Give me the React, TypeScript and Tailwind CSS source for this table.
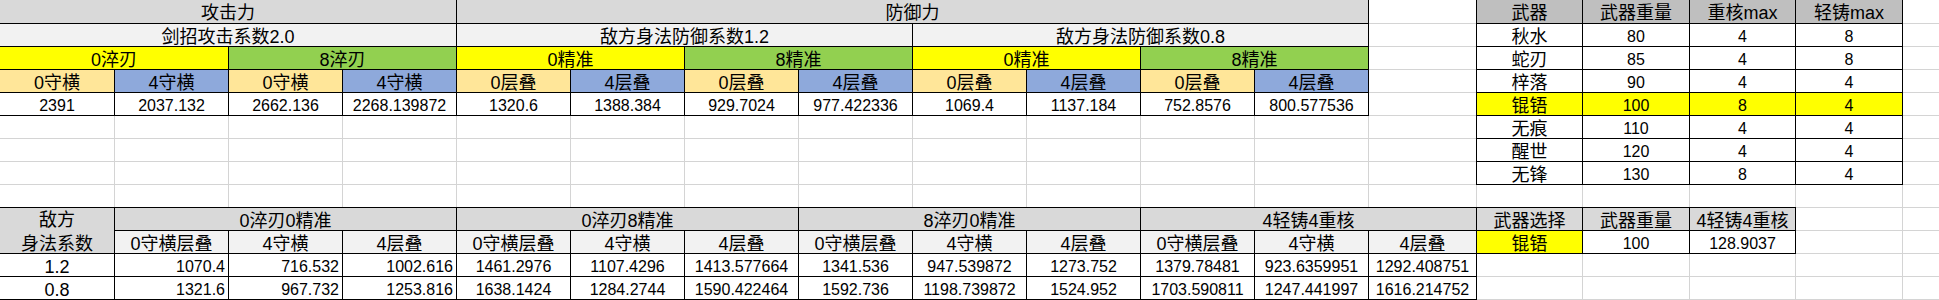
import type { ReactNode } from 'react';

const ORANGE = 'bg-[#ffe699]';
const BLUE = 'bg-[#8ea9db]';
const YELLOW = 'bg-[#ffff00]';
const GREEN = 'bg-[#92d050]';

interface CellProps {
  children?: ReactNode;
  className?: string;
  right?: boolean;
}

function Cell({ children, className = '', right = false }: CellProps) {
  const numeric = typeof children === 'number';
  return (
    <div
      className={[
        'overflow-hidden whitespace-nowrap text-black',
        numeric ? 'text-[16px] leading-[25px]' : 'text-[18px] leading-[26px]',
        right ? 'text-right pr-[3px]' : 'text-center',
        className || 'bg-white',
      ].join(' ')}
    >
      {children}
    </div>
  );
}

const attackRow = [2391, 2037.132, 2662.136, 2268.139872, 1320.6, 1388.384, 929.7024, 977.422336, 1069.4, 1137.184, 752.8576, 800.577536];

const stackHeads = ['0守横', '4守横', '0守横', '4守横', '0层叠', '4层叠', '0层叠', '4层叠', '0层叠', '4层叠', '0层叠', '4层叠'];

const weapons: [string, number, number, number][] = [
  ['秋水', 80, 4, 8],
  ['蛇刃', 85, 4, 8],
  ['梓落', 90, 4, 4],
  ['锟铻', 100, 8, 4],
  ['无痕', 110, 4, 4],
  ['醒世', 120, 4, 4],
  ['无锋', 130, 8, 4],
];

const enemyRows: [string, number[]][] = [
  ['1.2', [1070.4, 716.532, 1002.616, 1461.2976, 1107.4296, 1413.577664, 1341.536, 947.539872, 1273.752, 1379.78481, 923.6359951, 1292.408751]],
  ['0.8', [1321.6, 967.732, 1253.816, 1638.1424, 1284.2744, 1590.422464, 1592.736, 1198.739872, 1524.952, 1703.590811, 1247.441997, 1616.214752]],
];

const comboHeads = ['0淬刃0精准', '0淬刃8精准', '8淬刃0精准', '4轻铸4重核'];

function DamageTable() {
  return (
    <div className="col-start-1 row-start-1 col-span-12 row-span-5 grid grid-cols-subgrid grid-rows-subgrid bg-black shadow-[0_0_0_1px_#000]">
      <div className="col-span-4 grid"><Cell className="bg-[#d9d9d9]">攻击力</Cell></div>
      <div className="col-span-8 grid"><Cell className="bg-[#d9d9d9]">防御力</Cell></div>

      <div className="col-span-4 grid"><Cell className="bg-[#f2f2f2]">剑招攻击系数2.0</Cell></div>
      <div className="col-span-4 grid"><Cell className="bg-[#f2f2f2]">敌方身法防御系数1.2</Cell></div>
      <div className="col-span-4 grid"><Cell className="bg-[#f2f2f2]">敌方身法防御系数0.8</Cell></div>

      <div className="col-span-2 grid"><Cell className={YELLOW}>0淬刃</Cell></div>
      <div className="col-span-2 grid"><Cell className={GREEN}>8淬刃</Cell></div>
      <div className="col-span-2 grid"><Cell className={YELLOW}>0精准</Cell></div>
      <div className="col-span-2 grid"><Cell className={GREEN}>8精准</Cell></div>
      <div className="col-span-2 grid"><Cell className={YELLOW}>0精准</Cell></div>
      <div className="col-span-2 grid"><Cell className={GREEN}>8精准</Cell></div>

      {stackHeads.map((h, i) => (
        <Cell key={`h${i}`} className={i % 2 === 0 ? ORANGE : BLUE}>{h}</Cell>
      ))}
      {attackRow.map((v, i) => (
        <Cell key={`v${i}`}>{v}</Cell>
      ))}
    </div>
  );
}

function WeaponTable() {
  return (
    <div className="col-start-14 row-start-1 col-span-4 row-span-8 grid grid-cols-subgrid grid-rows-subgrid bg-black shadow-[0_0_0_1px_#000]">
      {['武器', '武器重量', '重核max', '轻铸max'].map((h) => (
        <Cell key={h} className="bg-[#bfbfbf]">{h}</Cell>
      ))}
      {weapons.map((w) => {
        const bg = w[0] === '锟铻' ? YELLOW : 'bg-white';
        return w.map((v, i) => (
          <Cell key={`${w[0]}-${i}`} className={bg}>{v}</Cell>
        ));
      })}
    </div>
  );
}

function EnemyTable() {
  return (
    <div className="col-start-1 row-start-10 col-span-13 row-span-4 grid grid-cols-subgrid grid-rows-subgrid bg-black shadow-[0_0_0_1px_#000]">
      <div className="row-span-2 bg-[#d9d9d9] text-center text-[18px] leading-[24px] text-black">
        敌方
        <br />
        身法系数
      </div>
      {comboHeads.map((h) => (
        <div key={h} className="col-span-3 grid"><Cell className="bg-[#d9d9d9]">{h}</Cell></div>
      ))}
      {comboHeads.flatMap((h) =>
        ['0守横层叠', '4守横', '4层叠'].map((s) => (
          <Cell key={`${h}-${s}`} className="bg-[#f2f2f2]">{s}</Cell>
        )),
      )}
      {enemyRows.map(([k, vals]) => [
        <Cell key={k}>{k}</Cell>,
        ...vals.map((v, i) => (
          <Cell key={`${k}-${i}`} right={i < 3}>{v}</Cell>
        )),
      ])}
    </div>
  );
}

function PickTable() {
  return (
    <div className="col-start-14 row-start-10 col-span-3 row-span-2 grid grid-cols-subgrid grid-rows-subgrid bg-black shadow-[0_0_0_1px_#000]">
      <Cell className="bg-[#d9d9d9]">武器选择</Cell>
      <Cell className="bg-[#d9d9d9]">武器重量</Cell>
      <Cell className="bg-[#d9d9d9]">4轻铸4重核</Cell>
      <Cell className={YELLOW}>锟铻</Cell>
      <Cell>{100}</Cell>
      <Cell>{128.9037}</Cell>
    </div>
  );
}

export default function App() {
  return (
    <div className="h-[300px] w-[1939px] overflow-hidden bg-white font-['Liberation_Sans','Noto_Sans_CJK_SC',sans-serif]">
      <div className="grid gap-px bg-[#d4d4d4] grid-cols-[114px_repeat(11,113px)_107px_105px_106px_105px_106px_1fr] grid-rows-[23px_repeat(13,22px)] auto-rows-[22px]">
        <DamageTable />
        <WeaponTable />
        <EnemyTable />
        <PickTable />
        {Array.from({ length: 110 }, (_, i) => (
          <div key={`f${i}`} className="bg-white" />
        ))}
      </div>
    </div>
  );
}
